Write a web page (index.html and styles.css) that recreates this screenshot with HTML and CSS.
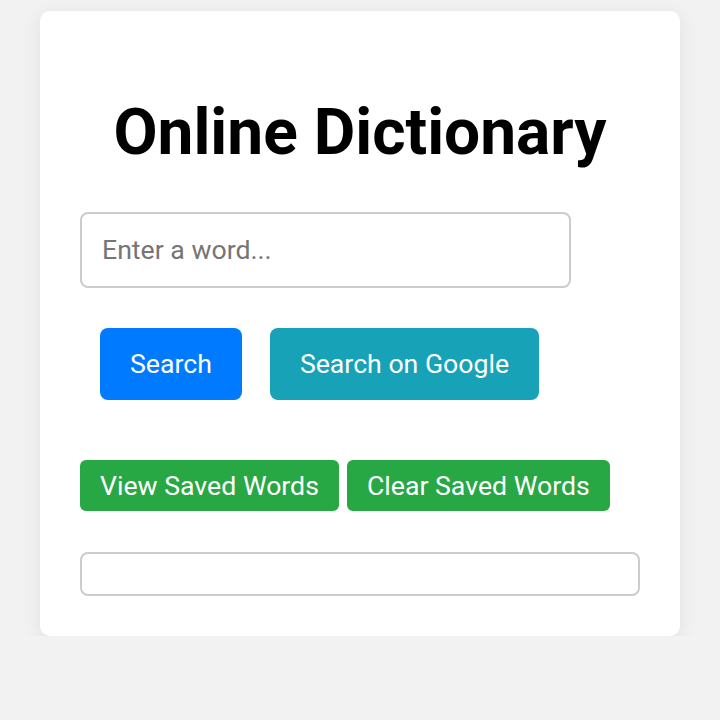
FILE: index.html
```html
<!DOCTYPE html>
<html lang="en">
<head>
  <meta charset="UTF-8" />
  <meta name="viewport" content="width=device-width, initial-scale=1.0" />
  <title>Online Dictionary</title>
  <link rel="stylesheet" href="styles.css">
</head>
<body>
  <div class="container">
    <h1>Online Dictionary</h1>
    <input type="text" id="word-input" placeholder="Enter a word..." />
    <div class="search-row">
      <button class="btn-search" onclick="searchWord()">Search</button>
      <button class="btn-google" onclick="searchGoogle()">Search on Google</button>
    </div>
    <div class="saved-row">
      <button class="btn-saved" onclick="viewSaved()">View Saved Words</button>
      <button class="btn-saved" onclick="clearSaved()">Clear Saved Words</button>
    </div>
    <div class="result" id="result"></div>
  </div>

  <script>
    function searchWord() {
      const word = document.getElementById('word-input').value.trim();
      document.getElementById('result').textContent = word ? 'Looking up "' + word + '"...' : '';
    }

    function searchGoogle() {
      const word = document.getElementById('word-input').value.trim();
      if (word) {
        window.open('https://www.google.com/search?q=define+' + encodeURIComponent(word));
      }
    }

    // saved words live in localStorage
    function viewSaved() {
      const saved = JSON.parse(localStorage.getItem('savedWords') || '[]');
      document.getElementById('result').textContent = saved.length ? saved.join(', ') : 'No saved words';
    }

    function clearSaved() {
      localStorage.removeItem('savedWords');
      document.getElementById('result').textContent = '';
    }
  </script>
</body>
</html>
```

FILE: styles.css
```css
:root {
  --blue: #007bff;
  --teal: #17a2b8;
  --green: #28a745;
  --border: #cccccc;
  --page-bg: #f2f2f2;
}

body {
  font-family: Roboto, "Liberation Sans", sans-serif;
  background: var(--page-bg);
  margin: 0;
  padding: 11px 40px 0;
}

.container {
  background: white;
  width: 640px;
  box-sizing: border-box;
  padding: 40px;
  border-radius: 10px;
  box-shadow: 0 4px 20px rgba(0, 0, 0, 0.08);
}

h1 {
  font-size: 64px;
  font-weight: bold;
  text-align: center;
  color: #000;
  margin: 44px 0 42px;
  line-height: 75px;
}

input {
  display: block;
  width: 491px;
  height: 76px;
  box-sizing: border-box;
  padding: 0 20px;
  font-family: inherit;
  font-size: 26.67px;
  border: 2px solid var(--border);
  border-radius: 8px;
}

input::placeholder {
  color: #757575;
}

button {
  font-family: inherit;
  font-size: 26.67px;
  color: white;
  border: none;
  border-radius: 8px;
  cursor: pointer;
}

.search-row {
  display: flex;
  gap: 28px;
  margin: 40px 0 0 20px;
}

.btn-search,
.btn-google {
  height: 72px;
  padding: 0 30px;
}

.btn-search {
  background: var(--blue);
}

.btn-google {
  background: var(--teal);
}

.saved-row {
  display: flex;
  gap: 8px;
  margin-top: 60px;
}

.btn-saved {
  background: var(--green);
  height: 51px;
  padding: 0 20px;
  border-radius: 6px;
}

.result {
  margin-top: 41px;
  height: 44px;
  box-sizing: border-box;
  border: 2px solid var(--border);
  border-radius: 8px;
  padding: 0 20px;
}
```
